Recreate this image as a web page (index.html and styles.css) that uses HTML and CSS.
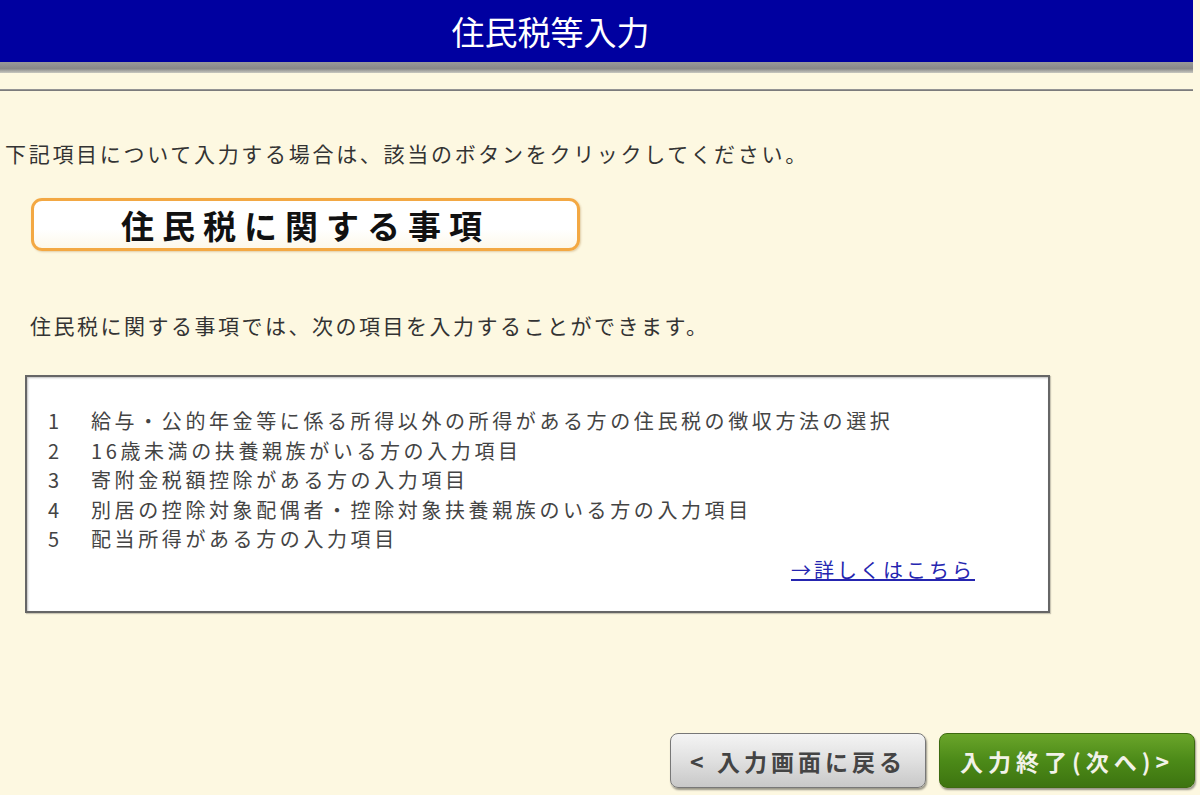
FILE: index.html
```html
<!DOCTYPE html>
<html lang="ja">
<head>
    <meta charset="UTF-8">
    <title>住民税等入力</title>
    <link rel="stylesheet" href="styles.css">
</head>
<body>
    <div class="page">
        <div class="header">
            <h1>住民税等入力</h1>
        </div>
        <div class="header-shade"></div>
        <hr class="rule">

        <p class="lead">下記項目について入力する場合は、該当のボタンをクリックしてください。</p>

        <div class="section-button">住民税に関する事項</div>

        <p class="note">住民税に関する事項では、次の項目を入力することができます。</p>

        <div class="item-box">
            <ol class="items">
                <li><span class="num">1</span>給与・公的年金等に係る所得以外の所得がある方の住民税の徴収方法の選択</li>
                <li><span class="num">2</span>16歳未満の扶養親族がいる方の入力項目</li>
                <li><span class="num">3</span>寄附金税額控除がある方の入力項目</li>
                <li><span class="num">4</span>別居の控除対象配偶者・控除対象扶養親族のいる方の入力項目</li>
                <li><span class="num">5</span>配当所得がある方の入力項目</li>
            </ol>
            <div class="more"><a href="#">→詳しくはこちら</a></div>
        </div>

        <div class="footer-buttons">
            <button class="btn btn-back">&lt; 入力画面に戻る</button>
            <button class="btn btn-next">入力終了(次へ)&gt;</button>
        </div>
    </div>
</body>
</html>
```

FILE: styles.css
```css
body {
    margin: 0;
    background-color: #fdf8e1;
    font-family: "Noto Sans CJK JP", "DejaVu Sans", sans-serif;
    color: #333;
}

.page {
    width: 1193px;
    height: 795px;
    display: flex;
    flex-direction: column;
}

.header {
    height: 62px;
    background-color: #0000a0;
    display: flex;
    align-items: center;
    justify-content: center;
}

.header h1 {
    margin: 0 0 0 -92px;
    color: #fff;
    font-size: 33px;
    font-weight: normal;
    letter-spacing: 0;
}

.header-shade {
    height: 11px;
    background: linear-gradient(#9a9a9a, #888 60%, #c8c8c0);
}

.rule {
    margin: 16px 0 0 0;
    height: 2px;
    border: none;
    background: linear-gradient(#a0a0a0, #707070);
}

.lead {
    margin: 48px 0 0 5px;
    font-size: 21px;
    letter-spacing: 2.7px;
    line-height: 28px;
}

.section-button {
    margin: 31px 0 0 31px;
    width: 543px;
    height: 47px;
    border: 3px solid #f3a843;
    border-radius: 11px;
    background: linear-gradient(#fff 60%, #fdf8ea);
    box-shadow: 1px 1px 2px rgba(160, 110, 40, 0.3);
    display: flex;
    align-items: center;
    justify-content: center;
    font-size: 33px;
    font-weight: bold;
    letter-spacing: 8px;
    color: #111;
}

.note {
    margin: 60px 0 0 30px;
    font-size: 21px;
    letter-spacing: 2.5px;
    line-height: 28px;
}

.item-box {
    margin: 36px 0 0 25px;
    width: 1021px;
    height: 234px;
    background-color: #fff;
    border: 2px solid #666;
    box-shadow: inset 1px 1px 2px rgba(0, 0, 0, 0.25), 1px 1px 1px rgba(0, 0, 0, 0.2);
    box-sizing: content-box;
}

.items {
    list-style: none;
    margin: 29px 0 0 0;
    padding: 0;
}

.items li {
    display: flex;
    font-size: 20px;
    line-height: 29.5px;
    letter-spacing: 3.6px;
    color: #444;
}

.items .num {
    width: 64px;
    padding-left: 21px;
    box-sizing: border-box;
}

.more {
    margin: 1px 0 0 764px;
    font-size: 20px;
    letter-spacing: 3px;
}

.more a {
    color: #2525b0;
}

.footer-buttons {
    margin-top: auto;
    margin-bottom: 7px;
    display: flex;
    justify-content: flex-end;
    gap: 13px;
}

.btn {
    height: 55px;
    border-radius: 8px;
    font-family: inherit;
    font-size: 23px;
    font-weight: bold;
    letter-spacing: 4px;
    padding: 0;
    cursor: pointer;
}

.btn-back {
    width: 256px;
    color: #444;
    border: 1px solid #777;
    background: linear-gradient(#f4f4f4, #e0e0e0 50%, #c8c8c8);
    box-shadow: 1px 2px 2px rgba(0, 0, 0, 0.4);
}

.btn-next {
    width: 256px;
    margin-right: -2px;
    color: #f2f2e8;
    border: 1px solid #3d6a10;
    background: linear-gradient(#6aa52a, #4c8a18 50%, #3d7410);
    box-shadow: 1px 2px 2px rgba(0, 0, 0, 0.4);
    letter-spacing: 5px;
}
```
